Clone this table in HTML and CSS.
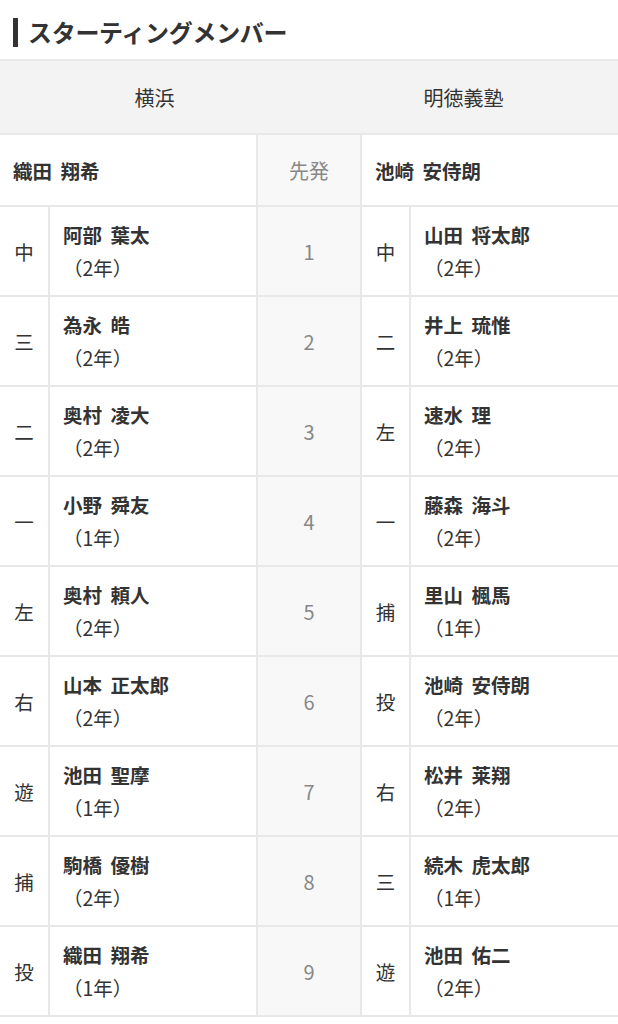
FILE: index.html
```html
<!DOCTYPE html>
<html lang="ja">
<head>
<meta charset="utf-8">
<title>スターティングメンバー</title>
<link rel="stylesheet" href="styles.css">
</head>
<body>
<section class="members">
  <h2 class="title"><span class="title-bar"></span><span class="title-text">スターティングメンバー</span></h2>
  <div class="grid">
    <div class="head">
      <div class="team">横浜</div>
      <div class="team">明徳義塾</div>
    </div>

    <div class="starter left">織田 翔希</div>
    <div class="order">先発</div>
    <div class="starter right">池崎 安侍朗</div>

    <div class="pos">中</div><div class="player"><span class="name">阿部 葉太</span><span class="year">（2年）</span></div>
    <div class="order">1</div>
    <div class="pos">中</div><div class="player"><span class="name">山田 将太郎</span><span class="year">（2年）</span></div>

    <div class="pos">三</div><div class="player"><span class="name">為永 皓</span><span class="year">（2年）</span></div>
    <div class="order">2</div>
    <div class="pos">二</div><div class="player"><span class="name">井上 琉惟</span><span class="year">（2年）</span></div>

    <div class="pos">二</div><div class="player"><span class="name">奥村 凌大</span><span class="year">（2年）</span></div>
    <div class="order">3</div>
    <div class="pos">左</div><div class="player"><span class="name">速水 理</span><span class="year">（2年）</span></div>

    <div class="pos">一</div><div class="player"><span class="name">小野 舜友</span><span class="year">（1年）</span></div>
    <div class="order">4</div>
    <div class="pos">一</div><div class="player"><span class="name">藤森 海斗</span><span class="year">（2年）</span></div>

    <div class="pos">左</div><div class="player"><span class="name">奥村 頼人</span><span class="year">（2年）</span></div>
    <div class="order">5</div>
    <div class="pos">捕</div><div class="player"><span class="name">里山 楓馬</span><span class="year">（1年）</span></div>

    <div class="pos">右</div><div class="player"><span class="name">山本 正太郎</span><span class="year">（2年）</span></div>
    <div class="order">6</div>
    <div class="pos">投</div><div class="player"><span class="name">池崎 安侍朗</span><span class="year">（2年）</span></div>

    <div class="pos">遊</div><div class="player"><span class="name">池田 聖摩</span><span class="year">（1年）</span></div>
    <div class="order">7</div>
    <div class="pos">右</div><div class="player"><span class="name">松井 莱翔</span><span class="year">（2年）</span></div>

    <div class="pos">捕</div><div class="player"><span class="name">駒橋 優樹</span><span class="year">（2年）</span></div>
    <div class="order">8</div>
    <div class="pos">三</div><div class="player"><span class="name">続木 虎太郎</span><span class="year">（1年）</span></div>

    <div class="pos">投</div><div class="player"><span class="name">織田 翔希</span><span class="year">（1年）</span></div>
    <div class="order">9</div>
    <div class="pos">遊</div><div class="player"><span class="name">池田 佑二</span><span class="year">（2年）</span></div>
  </div>
</section>
</body>
</html>
```

FILE: styles.css
```css
* { box-sizing: border-box; }
html, body {
  margin: 0;
  padding: 0;
  background: #fff;
}
body {
  font-family: "Noto Sans CJK JP", "Noto Sans", sans-serif;
  color: #333;
}
.title {
  margin: 0;
  height: 59px;
  padding: 18px 0 0 13px;
  display: flex;
  align-items: flex-start;
  font-size: 24px;
  font-weight: 700;
  line-height: 28px;
  color: #333;
}
.title-bar {
  width: 5px;
  height: 29px;
  background: #333;
  flex: none;
}
.title-text {
  margin-left: 10px;
  letter-spacing: -0.3px;
}
.grid {
  display: grid;
  grid-template-columns: 48px 206px 102px 47px 1fr;
  grid-template-rows: 72px 70px;
  grid-auto-rows: 88px;
  gap: 2px;
  padding: 2px 0;
  background: #e8e8e8;
}
.grid > div { background: #fff; }
.head {
  grid-column: 1 / -1;
  display: grid;
  grid-template-columns: 1fr 1fr;
}
.grid > .head { background: #f3f3f3; }
.team {
  display: flex;
  align-items: center;
  justify-content: center;
  font-size: 20px;
  color: #333;
}
.starter {
  display: flex;
  align-items: center;
  padding-left: 13px;
  font-size: 19.5px;
  font-weight: 700;
  word-spacing: 4px;
  color: #333;
}
.starter.left { grid-column: 1 / 3; }
.starter.right { grid-column: 4 / 6; }
.grid > .order {
  background: #f8f8f8;
  display: flex;
  align-items: center;
  justify-content: center;
  font-size: 20px;
  color: #888;
}
.pos {
  display: flex;
  align-items: center;
  justify-content: center;
  font-size: 19.5px;
  color: #333;
}
.player {
  display: flex;
  flex-direction: column;
  justify-content: center;
  padding-left: 13px;
  color: #333;
}
.name {
  font-size: 19.5px;
  font-weight: 700;
  line-height: 33px;
  word-spacing: 4px;
}
.year {
  font-size: 19.5px;
  line-height: 33px;
}
```
